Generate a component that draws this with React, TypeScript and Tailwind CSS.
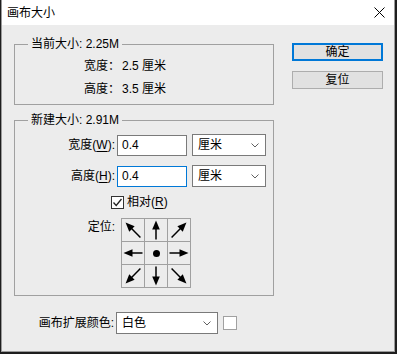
import React from 'react';

const FONT = "font-['Liberation_Sans','Noto_Sans_CJK_SC',sans-serif]";

// direction of each anchor arrow, row by row; null = centre dot
const ANCHORS: (number | null)[] = [315, 0, 45, 270, null, 90, 225, 180, 135];

function Chevron() {
  return (
    <svg width="8" height="5" viewBox="0 0 8 5" className="shrink-0">
      <path d="M0.5 0.5 L4 4 L7.5 0.5" fill="none" stroke="#606060" strokeWidth="1" />
    </svg>
  );
}

function Arrow({ angle }: { angle: number }) {
  const len = angle % 90 === 0 ? 19 : 21;
  const tip = 11 - len / 2;
  const end = 11 + len / 2;
  return (
    <svg width="22" height="22" viewBox="0 0 22 22">
      <g transform={`rotate(${angle} 11 11)`}>
        <line x1="11" y1={tip + 6} x2="11" y2={end} stroke="#000" strokeWidth="1.5" />
        <polygon points={`11,${tip} 7.2,${tip + 9} 14.8,${tip + 9}`} fill="#000" />
      </g>
    </svg>
  );
}

function Select({ value, width }: { value: string; width: string }) {
  return (
    <div
      className={`flex h-[22px] items-center justify-between border border-[#7a7a7a] bg-white pl-[5px] pr-[6px] ${width}`}
    >
      <span>{value}</span>
      <Chevron />
    </div>
  );
}

function SizeRow({ label, hotkey, focused }: { label: string; hotkey: string; focused?: boolean }) {
  return (
    <div className="flex items-center">
      <div className="w-[100px] text-right">
        {label}(<u className="underline-offset-2">{hotkey}</u>):
      </div>
      <div
        className={`ml-[2px] flex h-[21px] w-[70px] items-center bg-white px-[4px] ${
          focused ? 'border border-[#0078d7]' : 'border border-[#7a7a7a]'
        }`}
      >
        0.4
      </div>
      <div className="ml-[5px]">
        <Select value="厘米" width="w-[74px]" />
      </div>
    </div>
  );
}

export default function App() {
  return (
    <div className={`h-[354px] w-[397px] overflow-hidden bg-[#1e1e1e] pl-[1px] text-[12px] leading-[16px] text-black ${FONT}`}>
      <div className="h-[352px] w-[394px] border border-t-0 border-[#9a9a9a] bg-[#ececec]">
        {/* Title bar */}
        <div className="flex h-[25px] items-center justify-between bg-white pl-[5px] pr-[9px]">
          <span>画布大小</span>
          <svg width="11" height="11" viewBox="0 0 11 11">
            <path d="M0.5 0.5 L10.5 10.5 M10.5 0.5 L0.5 10.5" stroke="#000" strokeWidth="1" />
          </svg>
        </div>

        <div className="flex items-start pt-[11px] pl-[12px]">
          {/* Left column */}
          <div className="flex w-[260px] flex-col">
            <fieldset className="border border-[#a0a0a0]">
              <legend className="ml-[13px] px-[3px]">当前大小: 2.25M</legend>
              <div className="flex flex-col gap-[7px] pt-[6px] pb-[7px] pl-[69px]">
                <div>
                  宽度：<span className="ml-[2px]">2.5 厘米</span>
                </div>
                <div>
                  高度：<span className="ml-[2px]">3.5 厘米</span>
                </div>
              </div>
            </fieldset>

            <fieldset className="mt-[7px] border border-[#a0a0a0]">
              <legend className="ml-[13px] px-[3px]">新建大小: 2.91M</legend>
              <div className="flex flex-col pt-[6px] pb-[7px]">
                <SizeRow label="宽度" hotkey="W" />
                <div className="mt-[9px]">
                  <SizeRow label="高度" hotkey="H" focused />
                </div>

                <div className="mt-[7px] flex items-center pl-[96px]">
                  <div className="flex h-[13px] w-[13px] items-center justify-center border border-[#333] bg-white">
                    <svg width="11" height="11" viewBox="0 0 11 11">
                      <path d="M1.5 5.5 L4.2 8.5 L9.5 2" fill="none" stroke="#222" strokeWidth="1.3" />
                    </svg>
                  </div>
                  <span className="ml-[3px]">
                    相对(<u className="underline-offset-2">R</u>)
                  </span>
                </div>

                <div className="mt-[8px] flex items-start">
                  <div className="w-[100px] pt-[1px] text-right">定位:</div>
                  <div className="ml-[6px] grid grid-cols-[repeat(3,22px)] gap-px border border-[#a0a0a0] bg-[#a0a0a0]">
                    {ANCHORS.map((a, i) => (
                      <div key={i} className="flex h-[22px] w-[22px] items-center justify-center bg-[#ececec]">
                        {a === null ? (
                          <div className="h-[7px] w-[7px] rounded-full bg-black" />
                        ) : (
                          <Arrow angle={a} />
                        )}
                      </div>
                    ))}
                  </div>
                </div>
              </div>
            </fieldset>

            <div className="mt-[16px] flex items-center">
              <div className="w-[100px] text-right">画布扩展颜色:</div>
              <div className="ml-[2px]">
                <Select value="白色" width="w-[102px]" />
              </div>
              <div className="ml-[5px] h-[14px] w-[14px] border border-[#a0a0a0] bg-white" />
            </div>
          </div>

          {/* Right column */}
          <div className="ml-[18px] flex w-[91px] flex-col gap-[10px] pt-[7px]">
            <button className="flex h-[18px] items-center justify-center border-2 border-[#0078d7] bg-[#e1e1e1]">
              确定
            </button>
            <button className="flex h-[18px] items-center justify-center border border-[#adadad] bg-[#e1e1e1]">
              复位
            </button>
          </div>
        </div>
      </div>
    </div>
  );
}
